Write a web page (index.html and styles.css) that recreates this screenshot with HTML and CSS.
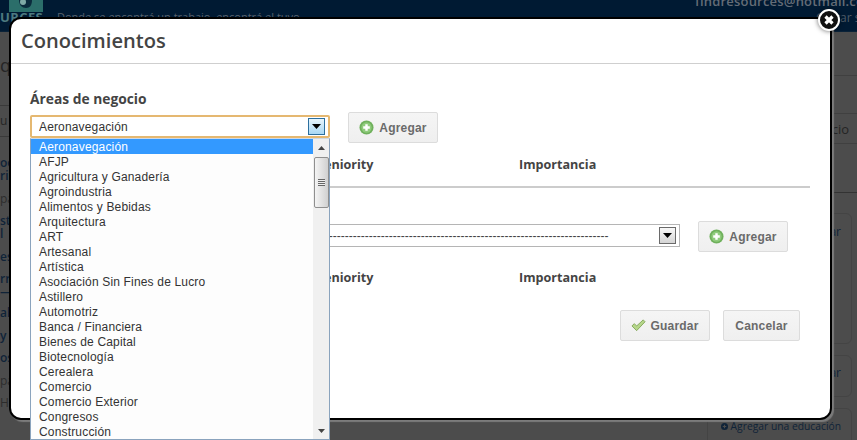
FILE: index.html
```html
<!DOCTYPE html>
<html lang="es">
<head>
<meta charset="utf-8">
<title>Conocimientos</title>
<link rel="stylesheet" href="styles.css">
</head>
<body>
<div class="page">
  <header class="top">
    <div class="logo">
      <svg class="logo-mark" viewBox="0 0 34 12"><rect width="34" height="12" fill="#2b6e6a"/><path d="M10 0c0 5 3 8 7 8s6-3 6-8z" fill="#0b2b3d"/><circle cx="14" cy="2" r="3" fill="#7fa9a6"/></svg>
      <span class="logo-text">URCES</span>
    </div>
    <div class="slogan">Donde se encontrá un trabajo, encontrá el tuyo</div>
    <div class="account"><div class="mail">findresources@hotmail.com</div><div class="logout">Cerrar sesión</div></div>
  </header>
  <div class="under">
    <div class="under-left">
      <div class="ul-big">qu</div>
      <div class="ul-row">u</div>
      <div class="ul-link">oo<br>ri</div>
      <div class="ul-small">pa</div>
      <div class="ul-link">st<br>l</div>
      <div class="ul-link">es</div>
      <div class="ul-link ul-tight">rr<br>—</div>
      <div class="ul-link">al</div>
      <div class="ul-link">y (</div>
      <div class="ul-link">os</div>
      <div class="ul-small">pa</div>
      <div class="ul-small">H</div>
    </div>
    <div class="under-right">
      <div class="ur-row ur-row-a"></div>
      <div class="ur-row ur-row-b">cio</div>
      <div class="ur-line"></div>
      <div class="ur-card ur-card-a"><span class="ur-link">ar</span></div>
      <div class="ur-card ur-card-b"><span class="ur-link">ar</span></div>
      <div class="ur-card ur-card-c"><svg class="ur-plus" viewBox="0 0 10 10"><circle cx="5" cy="5" r="5"/><path d="M5 2.5v5M2.5 5h5"/></svg>Agregar una educación</div>
    </div>
  </div>
</div>

<div class="modal">
  <h1 class="modal-title">Conocimientos</h1>
  <div class="modal-body">
    <label class="field-label">Áreas de negocio</label>
    <div class="select-row">
      <div class="select select-open">
        <span class="select-value">Aeronavegación</span>
        <span class="select-arrow select-arrow-on"><svg viewBox="0 0 9 5"><path d="M0 0h9L4.5 5z"/></svg></span>
      </div>
      <button class="btn btn-add"><svg class="ico" viewBox="0 0 16 16"><circle cx="8" cy="8" r="7.5" fill="#6fb05c"/><circle cx="8" cy="8" r="5.5" fill="#8fcb7c"/><path d="M8 4.5v7M4.5 8h7" stroke="#fff" stroke-width="2.6"/></svg>Agregar</button>
    </div>
    <div class="col-heads"><span class="col-a">Seniority</span><span>Importancia</span></div>
    <div class="rule"></div>
    <div class="select-row select-row-b">
      <div class="select select-b">
        <span class="select-value">----------------------------------------------------------------------------------------------------------------------------------------------</span>
        <span class="select-arrow"><svg viewBox="0 0 9 5"><path d="M0 0h9L4.5 5z"/></svg></span>
      </div>
      <button class="btn btn-add"><svg class="ico" viewBox="0 0 16 16"><circle cx="8" cy="8" r="7.5" fill="#6fb05c"/><circle cx="8" cy="8" r="5.5" fill="#8fcb7c"/><path d="M8 4.5v7M4.5 8h7" stroke="#fff" stroke-width="2.6"/></svg>Agregar</button>
    </div>
    <div class="col-heads col-heads-b"><span class="col-a">Seniority</span><span>Importancia</span></div>
    <div class="actions">
      <button class="btn btn-save"><svg class="ico-check" viewBox="0 0 16 13"><path d="M1 7l2.5-2.5L6 7l7-6.5 2 2L6 12z" fill="#b5d68a" stroke="#84a85c" stroke-width="1"/></svg>Guardar</button>
      <button class="btn btn-cancel">Cancelar</button>
    </div>
  </div>
</div>

<div class="close"><svg viewBox="0 0 12 12"><path d="M2.5 2.5l7 7M9.500 2.500l-7 7" stroke="#fff" stroke-width="3.2"/></svg></div>

<div class="dropdown">
  <ul class="options">
    <li class="option-on">Aeronavegación</li>
    <li>AFJP</li>
    <li>Agricultura y Ganadería</li>
    <li>Agroindustria</li>
    <li>Alimentos y Bebidas</li>
    <li>Arquitectura</li>
    <li>ART</li>
    <li>Artesanal</li>
    <li>Artística</li>
    <li>Asociación Sin Fines de Lucro</li>
    <li>Astillero</li>
    <li>Automotriz</li>
    <li>Banca / Financiera</li>
    <li>Bienes de Capital</li>
    <li>Biotecnología</li>
    <li>Cerealera</li>
    <li>Comercio</li>
    <li>Comercio Exterior</li>
    <li>Congresos</li>
    <li>Construcción</li>
  </ul>
  <div class="scrollbar">
    <span class="sb-btn"><svg viewBox="0 0 7 4"><path d="M3.500 0L7 4H0z"/></svg></span>
    <span class="sb-thumb"><span class="sb-grip"></span></span>
    <span class="sb-btn sb-btn-end"><svg viewBox="0 0 7 4"><path d="M0 0h7L3.500 4z"/></svg></span>
  </div>
</div>
</body>
</html>
```
FILE: styles.css
```css
html, body { margin: 0; padding: 0; }
body { width: 857px; height: 440px; overflow: hidden; position: relative; background: #4c4c4c; font-family: "Liberation Sans", Arial, sans-serif; }
.page { height: 440px; display: flex; flex-direction: column; }
.top { box-sizing: border-box; height: 32px; flex: none; background: #001a33; display: flex; color: #5f6a76; font-family: "Open Sans", sans-serif; border-bottom: 1px solid #0a2238; overflow: hidden; }
.logo { width: 45px; flex: none; overflow: hidden; }
.logo-mark { display: block; margin-left: 9px; width: 34px; height: 12px; }
.logo-text { display: block; font-size: 13px; font-weight: 700; line-height: 13px; margin-top: -1px; letter-spacing: .4px; color: #4d7a80; }
.slogan { font-size: 11px; margin: 9px 0 0 12px; white-space: nowrap; flex: 1; color: #56606c; }
.account { font-size: 13px; line-height: 14px; margin-top: -6px; white-space: nowrap; width: 175px; flex: none; overflow: hidden; }
.mail { font-weight: 600; color: #646c76; letter-spacing: .2px; margin-left: 13px; }
.logout { font-size: 12px; margin: 3px 0 0 134px; color: #4e5a68; }
.under { flex: 1; display: flex; justify-content: space-between; font-family: "Open Sans", sans-serif; font-size: 12px; }
.under-left { width: 30px; overflow: hidden; }
.ul-big { font-size: 18px; margin-top: 21px; line-height: 24px; color: #252525; border-bottom: 1px solid #3a3a3a; padding-bottom: 28px; }
.ul-row { line-height: 30px; border-bottom: 1px solid #3a3a3a; color: #252525; margin-bottom: 19px; }
.ul-link { font-weight: 600; line-height: 13px; margin-bottom: 9.5px; color: #0f2338; }
.ul-tight { margin-bottom: 8px; }
.ul-small { line-height: 13px; margin-bottom: 9.5px; color: #2c2c2c; }
.under-right { width: 150px; overflow: hidden; text-align: right; color: #1a2a3a; }
.ur-row { box-sizing: border-box; border-top: 1px solid #404040; }
.ur-row-a { margin-top: 43px; height: 38px; }
.ur-row-b { height: 31px; line-height: 30px; padding-right: 8px; border-bottom: 1px solid #404040; color: #242424; font-size: 13px; }
.ur-line { height: 1px; margin-top: 48px; background: #333; }
.ur-card { box-sizing: border-box; margin-right: 5px; border: 1px solid #444; border-radius: 6px; color: #0f2338; }
.ur-card-a { margin-top: 20px; height: 131px; padding: 10px 10px 0 0; }
.ur-card-b { margin-top: 11px; height: 42px; padding: 9px 10px 0 0; }
.ur-card-c { margin-top: 11px; height: 40px; padding: 9px 10px 0 0; font-size: 10.3px; line-height: 16px; white-space: nowrap; }
.ur-link { display: block; font-size: 12px; line-height: 16px; }
.ur-plus { width: 7px; height: 7px; margin-right: 3px; }
.ur-plus circle { fill: #0f2338; }
.ur-plus path { stroke: #4c4c4c; stroke-width: 1.6; }

.modal { position: absolute; left: 9px; top: 17px; width: 819px; height: 399px; background: #fff; border: 2px solid #000; border-radius: 12px; box-shadow: 2px 2px 1px #7c7c7c; font-family: "Open Sans", sans-serif; color: #444; }
.modal-title { margin: 0; box-sizing: border-box; height: 45px; font-size: 20.1px; font-weight: 600; line-height: 44px; padding-left: 10px; border-bottom: 1px solid #cfcfcf; color: #444; }
.modal-body { padding: 26px 20px 0 19px; }
.field-label { display: block; font-size: 13.8px; font-weight: 700; line-height: 18px; color: #444; }
.select-row { display: flex; align-items: flex-start; gap: 18px; margin-top: 4px; }
.select { box-sizing: border-box; width: 300px; height: 23px; margin-top: 3px; background: #fff; display: flex; align-items: center; font-family: "Liberation Sans", Arial, sans-serif; font-size: 12px; letter-spacing: .15px; color: #333; overflow: hidden; }
.select-open { border: 2px solid #e5b871; border-radius: 2px; padding: 0 0 0 7px; }
.select-open .select-value { padding-top: 1px; }
.select-value { flex: 1; white-space: nowrap; overflow: hidden; }
.select-arrow { box-sizing: border-box; flex: none; width: 17px; height: 17px; border: 1px solid #6a6a6a; background: linear-gradient(#f8f8f8, #d4d4d4); display: flex; align-items: center; justify-content: center; margin-right: 3px; }
.select-arrow svg { width: 9px; height: 5px; fill: #000; }
.select-arrow-on { border-color: #2c6f9e; background: linear-gradient(#e8f5fc, #a8d8f5); }
.btn { box-sizing: border-box; height: 31px; border: 1px solid #dcdcdc; border-radius: 2px; background: linear-gradient(#f5f5f5, #efefef); font-family: "Liberation Sans", Arial, sans-serif; font-size: 12px; font-weight: 700; color: #6a6a6a; display: inline-flex; align-items: center; justify-content: center; padding: 0; letter-spacing: .2px; flex: none; }
.btn-add { width: 90px; gap: 5px; }
.ico { width: 15px; height: 15px; }
.col-heads { display: flex; font-size: 12.6px; font-weight: 700; margin-top: 12px; line-height: 20px; color: #444; padding-left: 287px; }
.col-a { width: 202px; }
.rule { height: 2px; background: #ccc; margin-top: 11px; }
.select-row-b { margin-top: 33px; padding-right: 22px; }
.select-b { flex: 1; width: auto; border: 1px solid #b5b5b5; padding: 0 0 0 10px; letter-spacing: 0; color: #444; }
.col-heads-b { margin-top: 16px; }
.actions { display: flex; justify-content: flex-end; gap: 13px; margin-top: 22px; padding-right: 10px; }
.btn-save { width: 90px; gap: 4px; }
.btn-cancel { width: 77px; }
.ico-check { width: 15px; height: 13px; }

.close { position: absolute; left: 818px; top: 9px; width: 18px; height: 18px; background: #111; border: 2px solid #fff; border-radius: 50%; box-shadow: 0 0 5px rgba(0,0,0,.6); display: flex; align-items: center; justify-content: center; }
.close svg { width: 12px; height: 12px; }

.dropdown { position: absolute; left: 30px; top: 138px; width: 300px; height: 302px; box-sizing: border-box; background: #fdfdfd; border: 1px solid #8aa3bd; border-top-color: #cfd9e4; display: flex; font-family: "Liberation Sans", Arial, sans-serif; font-size: 12px; letter-spacing: .17px; color: #333; overflow: hidden; }
.options { flex: 1; list-style: none; margin: 0; padding: 0; }
.options li { height: 15px; line-height: 16px; padding-left: 8px; white-space: nowrap; }
.options .option-on { background: #3399ff; color: #fff; }
.scrollbar { flex: none; width: 16px; background: #f0f0f0; display: flex; flex-direction: column; align-items: center; }
.sb-btn { flex: none; height: 17px; display: flex; align-items: center; justify-content: center; }
.sb-btn svg { width: 7px; height: 4px; fill: #444; }
.sb-btn-end { margin-top: auto; }
.sb-thumb { box-sizing: border-box; width: 15px; height: 51px; margin-top: 1px; border: 1px solid #8f8f8f; border-radius: 2px; background: linear-gradient(90deg, #f4f4f4, #d0d0d0); display: flex; align-items: center; justify-content: center; flex: none; }
.sb-grip { width: 7px; height: 7px; background: repeating-linear-gradient(#666 0 1px, #eee 1px 2px); }
```
